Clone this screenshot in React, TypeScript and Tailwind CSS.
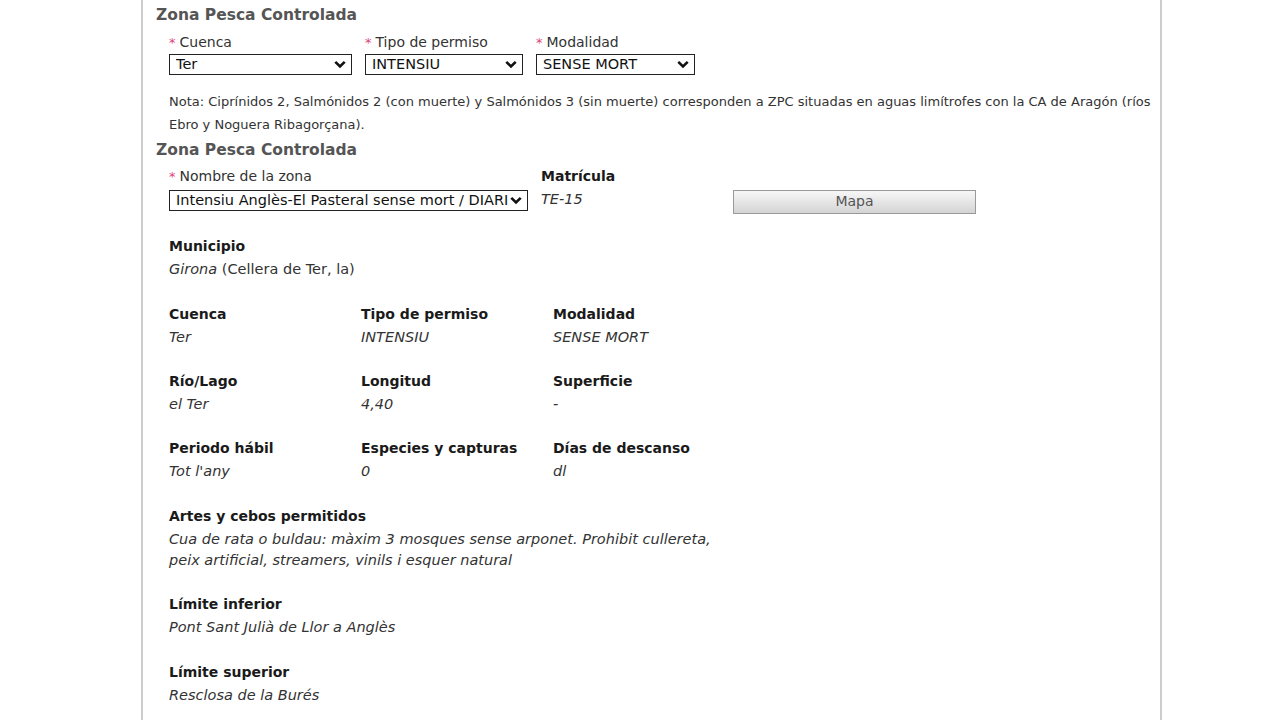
import * as React from "react";

const font = { fontFamily: '"DejaVu Sans", Verdana, sans-serif' };

type Opt = { label: string; value: string; width: string };

function Req({ children }: { children: React.ReactNode }) {
  return (
    <label className="block text-[14px] leading-[23px] text-[#333]">
      <span className="mr-[4px] text-[13px] text-[#e0457b]">*</span>
      {children}
    </label>
  );
}

function Sel({ value, width }: { value: string; width: string }) {
  return (
    <div
      className={`flex h-[21px] items-center border border-[#222] bg-white pl-[6px] pr-[5px] text-[14.5px] text-[#111] ${width}`}
    >
      <span className="flex-1 overflow-hidden whitespace-nowrap">{value}</span>
      <svg width="12" height="9" viewBox="0 0 12 9" className="ml-[1px] shrink-0">
        <path d="M1.3 1.8 L6 6.5 L10.7 1.8" fill="none" stroke="#111" strokeWidth="2.6" />
      </svg>
    </div>
  );
}

function Field({ label, children }: { label: string; children: React.ReactNode }) {
  return (
    <div>
      <div className="text-[14px] font-bold leading-[23px] text-[#1a1a1a]">{label}</div>
      <div className="text-[14.5px] leading-[23px] text-[#333]">{children}</div>
    </div>
  );
}

const selects: Opt[] = [
  { label: "Cuenca", value: "Ter", width: "w-[183px]" },
  { label: "Tipo de permiso", value: "INTENSIU", width: "w-[158px]" },
  { label: "Modalidad", value: "SENSE MORT", width: "w-[159px]" },
];

export default function App() {
  return (
    <div className="min-h-[720px] bg-white pl-[141px]" style={font}>
      <div className="min-h-[720px] w-[1021px] border-x-2 border-[#cdcdcd] pl-[13px] pr-[2px]">
        <h2 className="pt-[4px] text-[15.5px] font-bold leading-[22px] text-[#555]">Zona Pesca Controlada</h2>
        <div className="ml-[13px] mt-[5px] flex gap-[13px]">
          {selects.map((s) => (
            <div key={s.label}>
              <Req>{s.label}</Req>
              <Sel value={s.value} width={s.width} />
            </div>
          ))}
        </div>
        <p className="ml-[13px] mt-[15px] text-[13px] leading-[23px] text-[#333]">
          Nota: Ciprínidos 2, Salmónidos 2 (con muerte) y Salmónidos 3 (sin muerte) corresponden a ZPC situadas en
          aguas limítrofes con la CA de Aragón (ríos Ebro y Noguera Ribagorçana).
        </p>

        <h2 className="pt-[1px] text-[15.5px] font-bold leading-[26px] text-[#555]">Zona Pesca Controlada</h2>
        <div className="ml-[13px] mt-[2px] flex">
          <div className="w-[372px]">
            <Req>Nombre de la zona</Req>
            <div className="mt-[2px]">
              <Sel value="Intensiu Anglès-El Pasteral sense mort / DIARI" width="w-[359px]" />
            </div>
          </div>
          <div className="w-[192px]">
            <div className="text-[14px] font-bold leading-[23px] text-[#1a1a1a]">Matrícula</div>
            <div className="text-[14.5px] italic leading-[23px] text-[#333]">TE-15</div>
          </div>
          <div className="pt-[24px]">
            <button className="h-[24px] w-[243px] border border-[#9a9a9a] bg-gradient-to-b from-[#f7f7f7] to-[#d4d4d4] text-[14px] text-[#555]">
              Mapa
            </button>
          </div>
        </div>

        <div className="ml-[13px] mt-[21px] flex flex-col gap-[22px]">
          <Field label="Municipio">
            <i>Girona</i> (Cellera de Ter, la)
          </Field>
          <div className="grid grid-cols-[192px_192px_192px] gap-y-[21px]">
            <Field label="Cuenca"><i>Ter</i></Field>
            <Field label="Tipo de permiso"><i>INTENSIU</i></Field>
            <Field label="Modalidad"><i>SENSE MORT</i></Field>
            <Field label="Río/Lago"><i>el Ter</i></Field>
            <Field label="Longitud"><i>4,40</i></Field>
            <Field label="Superficie"><i>-</i></Field>
            <Field label="Periodo hábil"><i>Tot l'any</i></Field>
            <Field label="Especies y capturas"><i>0</i></Field>
            <Field label="Días de descanso"><i>dl</i></Field>
          </div>
          <div className="w-[560px]">
            <Field label="Artes y cebos permitidos">
              <i className="block pt-[1px] leading-[21px]">
                Cua de rata o buldau: màxim 3 mosques sense arponet. Prohibit cullereta, peix artificial, streamers,
                vinils i esquer natural
              </i>
            </Field>
          </div>
          <Field label="Límite inferior"><i>Pont Sant Julià de Llor a Anglès</i></Field>
          <Field label="Límite superior"><i>Resclosa de la Burés</i></Field>
        </div>
      </div>
    </div>
  );
}
